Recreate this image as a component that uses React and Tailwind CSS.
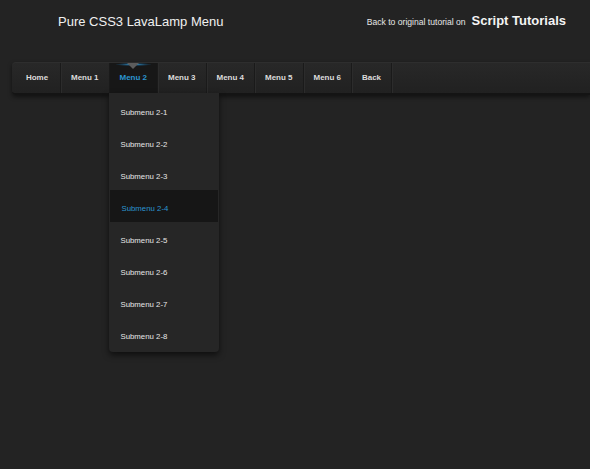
import React from 'react'

const menus = ['Home', 'Menu 1', 'Menu 2', 'Menu 3', 'Menu 4', 'Menu 5', 'Menu 6', 'Back']
const subs = ['Submenu 2-1', 'Submenu 2-2', 'Submenu 2-3', 'Submenu 2-4', 'Submenu 2-5', 'Submenu 2-6', 'Submenu 2-7', 'Submenu 2-8']

const App = () => {
    return (
        <div className="min-h-[469px] bg-[#232323] font-['Liberation_Sans',Arial,sans-serif] overflow-hidden">
            {/* header */}
            <div className="flex items-end h-[62px] pb-[32px]">
                <h1 className="ml-[58px] text-[13px] leading-none text-[#f0f0f0] pb-[2px]">Pure CSS3 LavaLamp Menu</h1>
                <div className="ml-auto mr-[24px] flex items-baseline">
                    <span className="text-[8.6px] text-[#e6e6e6]">Back to original tutorial on</span>
                    <span className="ml-[6px] text-[13px] font-bold text-[#f4f4f4]">Script Tutorials</span>
                </div>
            </div>

            {/* menu bar */}
            <div className="ml-[12px] h-[33px] rounded-l-[4px] bg-gradient-to-b from-[#282828] to-[#212121] border-t border-[#2e2e2e] border-b-2 border-b-[#141414] shadow-[0_2px_4px_rgba(0,0,0,0.5)] flex pl-[2px]">
                {menus.map((m, i) => {
                    const active = m === 'Menu 2'
                    const w = i === 0 ? 'w-[47px]' : i === 7 ? 'w-[40px]' : 'w-[48.5px]'
                    return (
                        <div key={m} className={`relative h-full flex items-center justify-center border-r border-[#1a1a1a] shadow-[1px_0_0_#2c2c2c] ${w} ${active ? 'bg-[#171717]' : ''}`}>
                            {active && (
                                <>
                                    <div className="absolute top-0 left-[6px] right-[6px] h-[3px] bg-[radial-gradient(ellipse_at_center,#3aa0d8_0%,rgba(30,120,180,0.4)_45%,transparent_75%)]" />
                                    <div className="absolute top-0 left-1/2 -translate-x-1/2 w-0 h-0 border-l-[6px] border-r-[6px] border-t-[6px] border-l-transparent border-r-transparent border-t-[#5c5c5c]" />
                                </>
                            )}
                            <span className={`text-[8px] font-bold ${active ? 'text-[#2b95d0]' : 'text-[#dcdcdc]'}`}>{m}</span>
                            {active && (
                                <div className="absolute top-full left-[-1px] w-[110px] bg-[#262626] rounded-b-[4px] shadow-[0_3px_6px_rgba(0,0,0,0.6)] z-10 pt-[1px] pb-[2px]">
                                    {subs.map(s => {
                                        const on = s === 'Submenu 2-4'
                                        return (
                                            <div key={s} className={`h-[32px] flex items-center pt-[5px] pl-[12px] ${on ? 'bg-[#161616] mx-[1px] pl-[11px]' : ''}`}>
                                                <span className={`text-[7.8px] ${on ? 'text-[#2b95d0]' : 'text-[#e6e6e6]'}`}>{s}</span>
                                            </div>
                                        )
                                    })}
                                </div>
                            )}
                        </div>
                    )
                })}
            </div>
        </div>
    )
}

export default App
